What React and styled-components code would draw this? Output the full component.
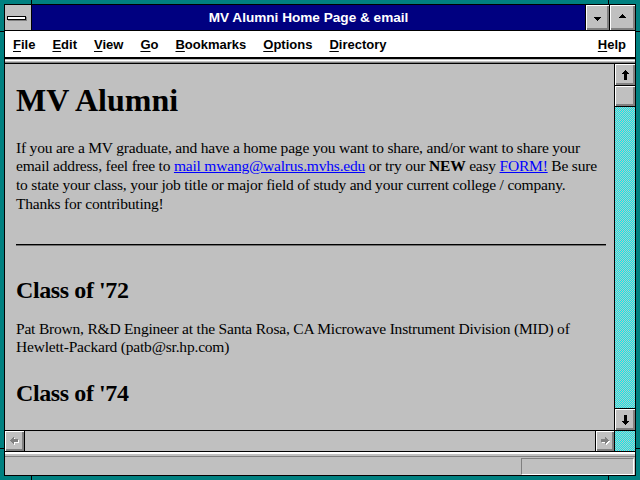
import React from "react";
import styled, { createGlobalStyle, css } from "styled-components";

const GlobalStyle = createGlobalStyle`
  html, body { margin: 0; padding: 0; background: #008080; }
  body { width: 640px; height: 480px; overflow: hidden; }
  * { box-sizing: border-box; }
`;

const dither = css`
  background-color: #c0c0c0;
  background-image: conic-gradient(#00f0f0 25%, transparent 0 50%, #00f0f0 0 75%, transparent 0);
  background-size: 2px 2px;
`;

const raised = css`
  background: #c0c0c0;
  box-shadow: inset 1px 1px #fff, inset -1px -1px #808080, inset -2px -2px #808080;
`;

const Frame = styled.div`
  position: relative;
  width: 640px;
  height: 480px;
  padding: 4px;
  background: #008080;
`;

const Notch = styled.span`
  position: absolute;
  background: #000;
  left: ${(p) => p.$x}px;
  top: ${(p) => p.$y}px;
  width: ${(p) => p.$w}px;
  height: ${(p) => p.$h}px;
`;

const Window = styled.div`
  width: 632px;
  height: 472px;
  border: 1px solid #000;
  display: flex;
  flex-direction: column;
  background: #c0c0c0;
`;

const TitleBar = styled.div`
  display: flex;
  height: 26px;
  flex-shrink: 0;
  border-bottom: 1px solid #000;
  background: #000080;
`;

const SysBox = styled.div`
  width: 27px;
  border-right: 1px solid #000;
  background: #c0c0c0;
  display: flex;
  align-items: center;
  padding-left: 2px;
`;

const SysBar = styled.div`
  width: 19px;
  height: 4px;
  background: #fff;
  border: 1px solid #000;
  box-shadow: 1px 1px 0 #808080;
`;

const Title = styled.div`
  flex: 1;
  display: flex;
  align-items: center;
  justify-content: center;
  color: #fff;
  font: bold 13.6px "Liberation Sans", Arial, sans-serif;
  padding-bottom: 1px;
`;

const TitleButton = styled.div`
  ${raised}
  width: ${(p) => p.$w}px;
  border-left: 1px solid #000;
  display: flex;
  align-items: center;
  justify-content: center;
  padding-top: ${(p) => p.$pt || 0}px;
  padding-bottom: ${(p) => p.$pb || 0}px;
`;

const MenuBar = styled.div`
  display: flex;
  align-items: center;
  height: 26px;
  flex-shrink: 0;
  background: #fff;
  padding: 0 9px 0 8px;
  gap: 17px;
  font: bold 13px "Liberation Sans", Arial, sans-serif;
  color: #000;
`;

const MenuItem = styled.span`
  margin-left: ${(p) => (p.$right ? "auto" : "0")};
  u { text-underline-offset: 2px; }
`;

const TopSep = styled.div`
  height: 7px;
  flex-shrink: 0;
  background: linear-gradient(
    to bottom,
    #000 0 2px,
    #c0c0c0 2px 3px,
    #fff 3px 4px,
    #c0c0c0 4px 5px,
    #808080 5px 6px,
    #000 6px 7px
  );
`;

const Main = styled.div`
  flex: 1;
  min-height: 0;
  display: grid;
  grid-template-columns: 1fr 21px;
  grid-template-rows: 1fr 21px;
`;

const ContentView = styled.div`
  overflow: hidden;
  padding: 18px 8px 0 11px;
  background: #c0c0c0;
  color: #000;
  font-family: "Liberation Serif", "Times New Roman", serif;
`;

const H1 = styled.h1`
  margin: 0;
  font: bold 32px/36px "Liberation Serif", "Times New Roman", serif;
`;

const H2 = styled.h2`
  margin: ${(p) => p.$mt}px 0 0;
  font: bold 24px/28px "Liberation Serif", "Times New Roman", serif;
  letter-spacing: -0.4px;
`;

const Para = styled.p`
  margin: ${(p) => p.$mt}px 0 0;
  font: 15.5px/18.67px "Liberation Serif", "Times New Roman", serif;
  letter-spacing: -0.2px;
  white-space: nowrap;
`;

const Link = styled.a`
  color: #0000ff;
  text-decoration: underline;
`;

const Rule = styled.hr`
  margin: 30.8px 0 0;
  border: 0;
  height: 2px;
  border-top: 1px solid #000;
  border-bottom: 1px solid #707070;
`;

const VScroll = styled.div`
  border-left: 1px solid #000;
  display: flex;
  flex-direction: column;
`;

const ScrollButton = styled.div`
  ${raised}
  width: ${(p) => p.$w || 20}px;
  height: ${(p) => p.$h || 20}px;
  flex-shrink: 0;
  display: flex;
  align-items: center;
  justify-content: center;
  border-top: ${(p) => (p.$bt ? "1px solid #000" : "0")};
  border-bottom: ${(p) => (p.$bb ? "1px solid #000" : "0")};
  border-left: ${(p) => (p.$bl ? "1px solid #000" : "0")};
  border-right: ${(p) => (p.$br ? "1px solid #000" : "0")};
`;

const Track = styled.div`
  flex: 1;
  ${dither}
`;

const HScroll = styled.div`
  border-top: 1px solid #000;
  display: flex;
  background: #c0c0c0;
`;

const HTrack = styled.div`
  flex: 1;
  background: #c0c0c0;
`;

const Corner = styled.div`
  border-top: 1px solid #000;
  border-left: 1px solid #000;
  ${dither}
`;

const StatusSep = styled.div`
  height: 6px;
  flex-shrink: 0;
  background: linear-gradient(
    to bottom,
    #000 0 1px,
    #fff 1px 3px,
    #c0c0c0 3px 5px,
    #808080 5px 6px
  );
`;

const StatusBar = styled.div`
  height: 18px;
  flex-shrink: 0;
  display: flex;
  justify-content: flex-end;
  padding: 1px 1px 0 0;
  background: #c0c0c0;
`;

const StatusBox = styled.div`
  width: 113px;
  height: 17px;
  border: 1px solid;
  border-color: #808080 #fff #fff #808080;
`;

const Glyph = ({ w, h, points, fill = "#000", shadow }) => (
  <svg width={w + (shadow ? 1 : 0)} height={h + (shadow ? 1 : 0)} shapeRendering="crispEdges" style={{ display: "block" }}>
    {shadow && <polygon points={points} fill="#fff" transform="translate(1,1)" />}
    <polygon points={points} fill={fill} />
  </svg>
);

const UP = "3.5,0 7,4 5,4 5,10 2,10 2,4 0,4";
const DOWN = "2,0 5,0 5,6 7,6 3.5,10 0,6 2,6";
const LEFT = "0,3.5 4,0 4,2 8,2 8,5 4,5 4,7";
const RIGHT = "0,2 4,2 4,0 8,3.5 4,7 4,5 0,5";

const menus = [
  ["F", "ile"],
  ["E", "dit"],
  ["V", "iew"],
  ["G", "o"],
  ["B", "ookmarks"],
  ["O", "ptions"],
  ["D", "irectory"],
];

export default function App() {
  return (
    <>
      <GlobalStyle />
      <Frame>
        <Notch $x={31} $y={0} $w={1} $h={4} />
        <Notch $x={608} $y={0} $w={1} $h={4} />
        <Notch $x={31} $y={476} $w={1} $h={4} />
        <Notch $x={608} $y={476} $w={1} $h={4} />
        <Notch $x={0} $y={31} $w={4} $h={1} />
        <Notch $x={0} $y={448} $w={4} $h={1} />
        <Notch $x={636} $y={31} $w={4} $h={1} />
        <Notch $x={636} $y={448} $w={4} $h={1} />
        <Window>
          <TitleBar>
            <SysBox>
              <SysBar />
            </SysBox>
            <Title>MV Alumni Home Page &amp; email</Title>
            <TitleButton $w={24} $pt={2}>
              <Glyph w={7} h={4} points="0,0 7,0 3.5,4" />
            </TitleButton>
            <TitleButton $w={26} $pb={3}>
              <Glyph w={7} h={4} points="3.5,0 7,4 0,4" />
            </TitleButton>
          </TitleBar>
          <MenuBar>
            {menus.map(([k, rest]) => (
              <MenuItem key={k}>
                <u>{k}</u>
                {rest}
              </MenuItem>
            ))}
            <MenuItem $right>
              <u>H</u>elp
            </MenuItem>
          </MenuBar>
          <TopSep />
          <Main>
            <ContentView>
              <H1>MV Alumni</H1>
              <Para $mt={20.5}>
                If you are a MV graduate, and have a home page you want to share, and/or want to share your
                <br />
                email address, feel free to <Link href="#">mail mwang@walrus.mvhs.edu</Link> or try our{" "}
                <b>NEW</b> easy <Link href="#">FORM!</Link> Be sure
                <br />
                to state your class, your job title or major field of study and your current college / company.
                <br />
                Thanks for contributing!
              </Para>
              <Rule />
              <H2 $mt={29.6}>Class of '72</H2>
              <Para $mt={16}>
                Pat Brown, R&amp;D Engineer at the Santa Rosa, CA Microwave Instrument Division (MID) of
                <br />
                Hewlett-Packard (patb@sr.hp.com)
              </Para>
              <H2 $mt={21.7}>Class of '74</H2>
            </ContentView>
            <VScroll>
              <ScrollButton $h={22} $bb>
                <Glyph w={7} h={10} points={UP} />
              </ScrollButton>
              <ScrollButton $h={21} $bb />
              <Track />
              <ScrollButton $h={22} $bt>
                <Glyph w={7} h={10} points={DOWN} />
              </ScrollButton>
            </VScroll>
            <HScroll>
              <ScrollButton $w={20} $br>
                <Glyph w={8} h={7} points={LEFT} fill="#808080" shadow />
              </ScrollButton>
              <HTrack />
              <ScrollButton $w={19} $bl>
                <Glyph w={8} h={7} points={RIGHT} fill="#808080" shadow />
              </ScrollButton>
            </HScroll>
            <Corner />
          </Main>
          <StatusSep />
          <StatusBar>
            <StatusBox />
          </StatusBar>
        </Window>
      </Frame>
    </>
  );
}
